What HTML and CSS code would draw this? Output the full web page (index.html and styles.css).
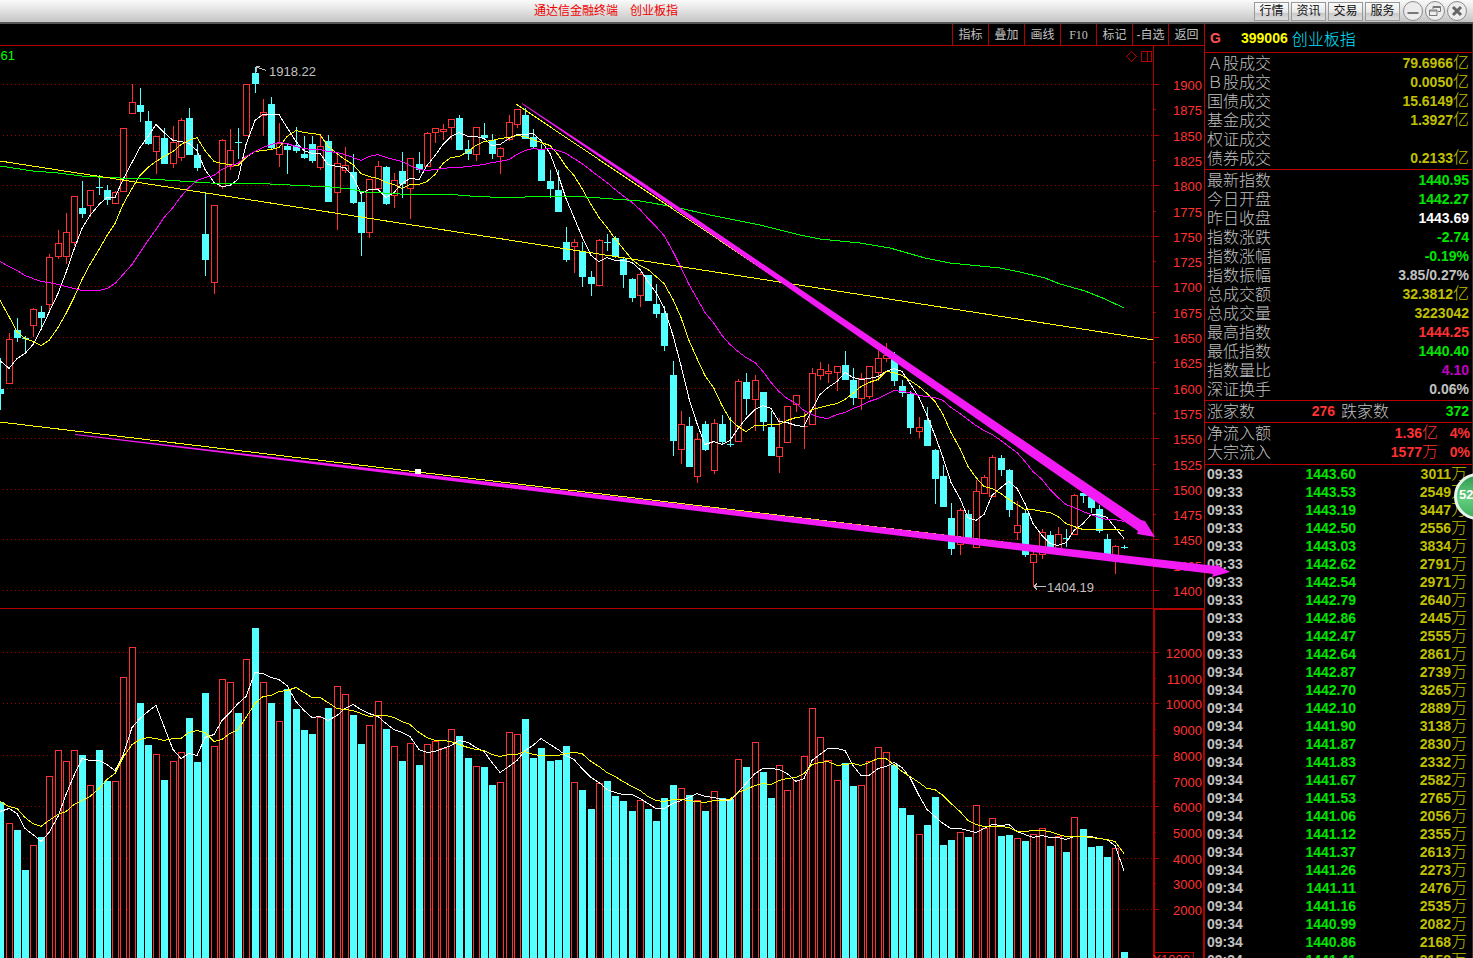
FILE: index.html
```html
<!DOCTYPE html>
<html lang="zh-CN">
<head>
<meta charset="utf-8">
<title>通达信金融终端 创业板指</title>
<link rel="stylesheet" href="styles.css">
</head>
<body>
<header class="titlebar">
  <h1 class="title">通达信金融终端<span class="title-symbol">创业板指</span></h1>
  <nav class="modules">
    <button class="module" type="button">行情</button>
    <button class="module" type="button">资讯</button>
    <button class="module" type="button">交易</button>
    <button class="module" type="button">服务</button>
  </nav>
  <div class="window-controls">
    <button class="control" type="button" aria-label="最小化"><svg viewBox="0 0 22 22"><circle cx="11" cy="11" r="9.5"/><path d="M5.500 13h11" stroke-width="2"/></svg></button>
    <button class="control" type="button" aria-label="还原"><svg viewBox="0 0 22 22"><circle cx="11" cy="11" r="9.500"/><path class="thin" d="M9 9V6.500h7.500v5H14M5.500 10H13v5.500H5.500zM5.500 11H13M9 7.500h7.500"/></svg></button>
    <button class="control" type="button" aria-label="关闭"><svg viewBox="0 0 22 22"><circle cx="11" cy="11" r="9.500"/><path class="cross" d="M7 7l8 8M15 7l-8 8"/></svg></button>
  </div>
</header>
<main class="workspace">
  <section class="chart-pane">
    <nav class="toolbar">
      <button class="tool" type="button">指标</button>
      <button class="tool" type="button">叠加</button>
      <button class="tool" type="button">画线</button>
      <button class="tool latin" type="button">F10</button>
      <button class="tool" type="button">标记</button>
      <button class="tool" type="button">-自选</button>
      <button class="tool" type="button">返回</button>
    </nav>
    <div class="chart-area">
      <svg class="chart" viewBox="0 46 1204 912" preserveAspectRatio="none" role="img" aria-label="创业板指 K线图">
        <g id="grid" class="crisp"></g>
        <g id="bars" class="crisp"></g>
        <g id="averages" class="crisp lines"></g>
        <g class="crisp lines">
          <polyline class="green" points="0,166 33,171 58,173 82,176 98,177 120,178 150,179 180,181 210,183 270,184 290,185 330,187 350,189 365,192 400,194 445,194 470,196 490,197 525,197 545,196 570,196 600,198 640,201 675,207 710,215 760,225 800,235 820,239 860,243 890,248 925,258 950,263 1000,268 1020,272 1045,278 1060,284 1085,291 1105,299 1124,308"/>
          <path class="yellow" d="M0 161L1153 340M0 422L1153 560M516 104L885 351"/>
          <path class="silver" d="M256.500 72V66M256.500 66H260M256.500 67L266 70.500M1046 586.500H1034M1034 586.500l3-3M1034 586.500l3 3"/>
          <path class="frame" d="M1126.500 56.500l5-5l5 5l-5 5zM1141.500 51.500h10v10h-10zM1147.500 51.500v10"/>
        </g>
        <g id="labels"></g>
        <g class="trend">
          <path d="M522 103L636 178L1141 520L1145 521L1155 537L1137 534L1138 531L636 182L522 104z"/>
          <path d="M75 434L1216 566L1215 564L1230 572L1212 577L1213 574L75 435z"/>
        </g>
        <rect class="handle" x="415" y="469" width="6" height="5"/>
      </svg>
    </div>
  </section>
  <aside class="quote-pane">
    <header class="symbol"><span class="flag">G</span><span class="code">399006</span><span class="name">创业板指</span></header>
    <table class="quotes">
      <tbody>
        <tr><th scope="row">Ａ股成交</th><td class="gold">79.6966<i>亿</i></td></tr>
        <tr><th scope="row">Ｂ股成交</th><td class="gold">0.0050<i>亿</i></td></tr>
        <tr><th scope="row">国债成交</th><td class="gold">15.6149<i>亿</i></td></tr>
        <tr><th scope="row">基金成交</th><td class="gold">1.3927<i>亿</i></td></tr>
        <tr><th scope="row">权证成交</th><td></td></tr>
        <tr><th scope="row">债券成交</th><td class="gold">0.2133<i>亿</i></td></tr>
      </tbody>
    </table>
    <table class="quotes">
      <tbody>
        <tr><th scope="row">最新指数</th><td class="down">1440.95</td></tr>
        <tr><th scope="row">今日开盘</th><td class="down">1442.27</td></tr>
        <tr><th scope="row">昨日收盘</th><td class="flat">1443.69</td></tr>
        <tr><th scope="row">指数涨跌</th><td class="down">-2.74</td></tr>
        <tr><th scope="row">指数涨幅</th><td class="down">-0.19%</td></tr>
        <tr><th scope="row">指数振幅</th><td>3.85/0.27%</td></tr>
        <tr><th scope="row">总成交额</th><td class="gold">32.3812<i>亿</i></td></tr>
        <tr><th scope="row">总成交量</th><td class="gold">3223042</td></tr>
        <tr><th scope="row">最高指数</th><td class="up">1444.25</td></tr>
        <tr><th scope="row">最低指数</th><td class="down">1440.40</td></tr>
        <tr><th scope="row">指数量比</th><td class="ratio">4.10</td></tr>
        <tr><th scope="row">深证换手</th><td>0.06%</td></tr>
      </tbody>
    </table>
    <table class="quotes breadth">
      <tbody><tr><th scope="row">涨家数</th><td class="up">276</td><th scope="row">跌家数</th><td class="down">372</td></tr></tbody>
    </table>
    <table class="quotes flows">
      <tbody>
        <tr><th scope="row">净流入额</th><td class="up">1.36<i>亿</i></td><td class="up share">4%</td></tr>
        <tr><th scope="row">大宗流入</th><td class="up">1577<i>万</i></td><td class="up share">0%</td></tr>
      </tbody>
    </table>
    <table class="ticks"><tbody id="ticks"></tbody></table>
  </aside>
  <div class="badge">52</div>
</main>
<script src="chart.js"></script>
</body>
</html>
```
FILE: styles.css
```css
* { box-sizing: border-box; }

body {
  margin: 0;
  height: 100vh;
  display: flex;
  flex-direction: column;
  overflow: hidden;
  background: #000;
  color: #c0c0c0;
  font-family: "Liberation Sans", "Noto Sans CJK SC", sans-serif;
}

button {
  margin: 0;
  padding: 0;
  font: inherit;
  color: inherit;
  white-space: nowrap;
}

.titlebar {
  flex: none;
  height: 24px;
  display: flex;
  align-items: center;
  padding: 0 5px 0 0;
  background: linear-gradient(#fafafa, #e6e6e6 40%, #c4c4c4);
  border-bottom: 2px solid #555;
}

.title {
  flex: 1;
  margin: 0;
  padding-right: 42px;
  text-align: center;
  font-size: 12px;
  line-height: 20px;
  font-weight: 400;
  color: #f00000;
}

.title-symbol { margin-left: 12px; }

.modules { display: flex; gap: 2px; }

.module {
  width: 35px;
  height: 19px;
  border: 1px solid #999;
  background: linear-gradient(#fafafa, #e8e8e8 55%, #cacaca 60%, #dcdcdc);
  color: #111;
  font-size: 12px;
  line-height: 16px;
}

.window-controls { display: flex; margin-left: 2px; }

.control {
  width: 22px;
  height: 22px;
  border: 0;
  background: none;
}

.control svg {
  display: block;
  width: 22px;
  height: 22px;
  fill: none;
  stroke: #777;
  stroke-width: 2;
}

.control circle { fill: #ececec; stroke: #8a8a8a; stroke-width: 1; }
.control .thin { stroke-width: 1; }
.control .cross { stroke: #666; stroke-width: 3; }

.workspace {
  position: relative;
  flex: 1;
  min-height: 0;
  display: flex;
  overflow: hidden;
}

.chart-pane {
  flex: 1;
  min-width: 0;
  display: flex;
  flex-direction: column;
}

.toolbar {
  flex: none;
  height: 22px;
  display: flex;
  justify-content: flex-end;
  border-bottom: 1px solid #b00000;
}

.tool {
  width: 36px;
  border: 0;
  border-left: 1px solid #b00000;
  background: #000;
  font-size: 12px;
  line-height: 20px;
}

.latin { font-family: "Liberation Serif", serif; }

.chart-area {
  position: relative;
  z-index: 1;
  flex: 1;
  min-height: 0;
}

.chart {
  display: block;
  width: 100%;
  height: 100%;
  overflow: visible;
}

.crisp { shape-rendering: crispEdges; }
.lines { fill: none; stroke-width: 1; }
.dots { stroke: #a00000; stroke-dasharray: 1 3; }
.frame { stroke: #b00000; fill: none; }
.thick { stroke-width: 2; }
.rise { stroke: #ff3232; fill: #000; }
.fall { fill: #54ffff; }
.white { stroke: #fff; }
.yellow { stroke: #ff0; }
.magenta { stroke: #f0f; }
.green { stroke: #0f0; }
.silver { stroke: #c0c0c0; }
.handle { fill: #fff; }
.trend { fill: #f31bf3; }

.axis-text { fill: #ff3232; font-size: 13px; text-anchor: end; }
.note-text { fill: #c0c0c0; font-size: 13px; }
.value-text { fill: #0f0; font-size: 13px; }

.quote-pane {
  flex: none;
  width: 269px;
  border-left: 1px solid #c00000;
  border-right: 1px solid #333;
  overflow: hidden;
}

.symbol {
  height: 29px;
  display: flex;
  align-items: center;
  padding-left: 5px;
  border-bottom: 1px solid #c00000;
  font-size: 14px;
  font-weight: 700;
}

.flag { width: 31px; color: #ff5050; }
.code { color: #ff0; }
.name { margin-left: 4px; color: #00e5ff; font-size: 16px; font-weight: 300; }

table { width: 100%; border-collapse: collapse; }

th {
  padding: 0;
  text-align: left;
  font-size: 16px;
  font-weight: 300;
  line-height: 19px;
}

td {
  padding: 0;
  text-align: right;
  font-size: 14px;
  font-weight: 700;
  line-height: 19px;
  white-space: nowrap;
}

td i { font-size: 16px; font-style: normal; font-weight: 300; line-height: 16px; }

.quotes { display: flex; border-bottom: 1px solid #c00000; padding: 1px 3px 1px 2px; }
.quotes tbody { flex: 1; }
.quotes tr { display: flex; justify-content: space-between; height: 19px; }
.breadth tr { justify-content: flex-start; }
.breadth th { width: 49px; }
.breadth td { width: 79px; }
.breadth th + td + th { margin-left: 6px; }
.breadth td:last-child { flex: 1; }
.flows { padding: 1px 2px 2px; }
.flows td { flex: 1; }
.flows .share { flex: none; width: 32px; }

.gold { color: #c0c000; }
.down { color: #00e600; }
.up { color: #ff3232; }
.flat { color: #fff; }
.ratio { color: #c000c0; }

.ticks td { height: 18px; line-height: 18px; }
.ticks td:first-child { padding-left: 2px; text-align: left; }
.ticks td:last-child { width: 116px; padding-right: 5px; }

.badge {
  position: absolute;
  z-index: 2;
  right: -28px;
  top: 449px;
  width: 47px;
  height: 47px;
  border: 3px solid #e8f4ea;
  border-radius: 50%;
  background: linear-gradient(#2f9a50, #62cf7c 55%, #3fae5e);
  color: #fff;
  font-size: 13px;
  font-weight: 700;
  line-height: 38px;
  padding-left: 2px;
}
```
FILE: chart.js
```js
// Each candle: direction (r = rise, c = fall), high, body top, body bottom, low, volume bar top.
const candles = `
c 358 389 394 410 802|r 333 339 383 383 823|c 318 330 338 342 830|c 336 338 339 354 870|r 308 309 325 336 845
c 306 312 318 330 837|r 254 257 304 312 776|r 230 243 256 258 750|r 213 232 256 263 761|r 196 196 242 245 750
c 181 208 214 218 755|r 190 190 205 216 785|c 175 187 187 195 750|c 185 190 200 205 781|r 191 192 203 203 781
r 128 128 191 191 677|r 84 102 113 113 647|c 88 105 112 122 703|c 111 121 144 145 745|r 136 136 151 173 754
c 128 138 164 164 780|r 126 142 163 167 761|r 118 120 157 160 752|c 108 118 155 155 718|c 144 155 168 171 762
c 193 234 260 276 693|r 205 205 282 293 746|r 139 140 186 188 679|r 129 150 166 169 682|c 128 142 142 159 713
r 84 84 135 135 659|c 67 73 84 93 628|r 99 112 115 135 682|c 97 104 148 150 703|r 123 143 154 166 721
c 144 146 150 174 689|c 127 145 151 153 709|c 136 154 158 159 730|c 136 144 161 163 734|r 135 146 167 169 717
c 135 141 202 202 708|r 154 163 192 229 686|r 147 165 170 172 694|c 154 172 203 204 715|c 191 202 233 256 744
r 179 179 232 237 725|r 161 166 188 188 701|c 166 167 204 205 729|r 173 180 195 207 746|c 152 171 184 198 761
r 158 158 188 218 743|c 152 164 170 173 765|r 132 133 166 166 744|r 128 128 132 142 741|r 124 129 131 139 748
r 119 119 127 139 729|c 115 118 150 150 736|c 140 149 154 160 758|r 127 127 154 160 766|c 123 135 138 138 767
c 134 140 154 159 785|r 147 148 156 173 782|r 115 122 139 140 732|r 109 109 124 127 734|c 108 115 139 139 719
c 129 137 147 148 758|c 144 149 181 181 748|c 170 181 189 198 761|c 170 190 212 212 760|c 227 242 260 262 746
r 239 242 246 272 782|c 242 251 277 287 790|c 271 277 284 296 809|r 239 240 285 285 783|c 234 242 242 251 781
c 236 238 257 258 796|c 258 259 275 288 801|c 278 279 298 302 811|r 272 274 295 306 800|c 275 275 301 301 809
c 284 304 314 318 821|c 306 313 346 351 798|c 361 375 441 456 785|r 411 424 449 463 788|c 417 426 467 467 795
r 433 439 476 482 800|c 421 424 450 451 811|r 419 423 470 473 791|c 415 424 442 445 798|c 417 444 444 447 799
r 379 381 441 441 759|c 373 382 399 415 767|r 375 380 399 430 742|c 392 392 422 431 772|c 411 427 456 456 798
r 418 447 456 472 765|r 406 406 442 442 790|r 395 395 404 411 780|r 412 426 426 448 756|r 368 373 424 424 708
r 362 369 375 379 737|r 364 371 373 382 760|r 366 366 372 390 780|c 351 365 380 380 763|c 368 380 398 405 786
r 373 378 398 409 785|r 366 366 396 398 761|r 351 358 372 380 747|r 343 355 358 361 752|c 352 356 381 386 765
c 380 386 393 397 808|c 391 394 428 434 815|r 417 427 431 437 834|c 407 420 446 446 825|c 449 450 479 504 797
c 465 476 507 507 845|c 503 518 549 555 840|r 508 510 544 554 832|c 510 514 541 541 837|r 480 491 547 547 805
r 475 477 493 493 828|r 455 457 496 496 818|c 455 458 470 476 836|c 469 470 510 517 835|r 501 525 532 539 838
c 510 513 555 557 841|r 552 554 562 586 834|r 529 532 554 558 828|c 531 535 550 550 846|r 527 534 550 550 836
c 529 538 538 547 852|r 494 495 534 534 817|c 493 493 496 503 829|c 496 497 508 513 847|c 505 509 531 533 846
c 534 539 556 556 857|r 545 546 557 573 848|c 545 547 547 549 952`
  .trim().split(/[|\n]/).map((row) => {
    const [kind, ...values] = row.split(" ");
    const [high, top, bottom, low, volume] = values.map(Number);
    return { kind, high, top, bottom, low, volume, close: kind === "r" ? top : bottom };
  });

const centre = (i) => Math.floor(0.8 + 8.2 * i);
const put = (id, markup) => { document.getElementById(id).innerHTML = markup; };

// Grid, axis and labels
let grid = "";
let labels = "";
const label = (x, y, text, name) => `<text x="${x}" y="${y}" class="${name}">${text}</text>`;

for (let k = 0; k <= 20; k++) {
  const y = Math.round(84 + k * 25.3) + 0.5;
  const major = k % 2 === 0;
  if (major) grid += `<path class="dots" d="M3 ${y}H1153"/>`;
  grid += `<path class="frame" d="M1153 ${y}h${major ? 6 : 3}"/>`;
  labels += label(1202, y + 5, 1900 - k * 25, "axis-text");
}
for (let k = 0; k <= 10; k++) {
  const y = Math.round(652 + k * 25.7) + 0.5;
  const major = k % 2 === 0;
  if (major) grid += `<path class="dots" d="M3 ${y}H1153"/>`;
  grid += `<path class="frame" d="M1155 ${y}h${major ? 4 : 1}"/>`;
  labels += label(1202, y + 5, 12000 - k * 1000, "axis-text");
}
grid += `<path class="frame" d="M1153.5 46V608M0 608.5H1154M1155 952.5H1193.5V958"/>`;
grid += `<path class="frame thick" d="M1154 958V609H1204V958"/>`;
labels += label(1190, 964, "X1000", "axis-text");
labels += label(269, 76, "1918.22", "note-text");
labels += label(1047, 592, "1404.19", "note-text");
labels += label(-3, 60, ".61", "value-text");

// Candles and volume bars
let bars = "";
candles.forEach((c, i) => {
  const x = centre(i);
  if (c.kind === "r") {
    const wick = `M${x + 0.5} ${c.high}V${c.top}M${x + 0.5} ${c.bottom + 1}V${c.low + 1}`;
    bars += `<path class="rise" d="${wick}"/>`;
    bars += c.top === c.bottom
      ? `<path class="rise" d="M${x - 3} ${c.top + 0.5}h7"/>`
      : `<rect class="rise" x="${x - 2.5}" y="${c.top + 0.5}" width="6" height="${c.bottom - c.top}"/>`;
    bars += `<rect class="rise" x="${x - 2.5}" y="${c.volume + 0.5}" width="6" height="${970 - c.volume}"/>`;
  } else {
    bars += `<rect class="fall" x="${x}" y="${c.high}" width="1" height="${c.low - c.high}"/>`;
    bars += `<rect class="fall" x="${x - 3}" y="${c.top}" width="7" height="${Math.max(1, c.bottom - c.top)}"/>`;
    bars += `<rect class="fall" x="${x - 3}" y="${c.volume}" width="7" height="${970 - c.volume}"/>`;
  }
});

// Moving averages; the seed holds the values that need earlier history.
function average(field, span, seed, name) {
  const points = candles.map((c, i) => {
    const value = i < seed.length
      ? seed[i]
      : candles.slice(i - span + 1, i + 1).reduce((sum, d) => sum + d[field], 0) / span;
    return `${centre(i)},${Math.round(value) + 0.5}`;
  });
  return `<polyline class="${name}" points="${points.join(" ")}"/>`;
}

put("grid", grid);
put("labels", labels);
put("bars", bars);
put("averages",
  average("close", 5, [360, 368, 358, 353], "white") +
  average("close", 10, [300, 316, 331, 338, 341, 345, 340, 327, 313], "yellow") +
  average("close", 20, [261, 266, 270, 275, 278, 281, 282, 284, 286, 288, 290, 290, 290, 288, 283, 274, 264, 252, 240], "magenta") +
  average("volume", 5, [811, 808, 813, 828], "white") +
  average("volume", 10, [801, 806, 808, 817, 823, 826, 820, 814, 811], "yellow"));

// Time and sales
const ticks = `1443.60 3011,1443.53 2549,1443.19 3447,1442.50 2556,1443.03 3834,1442.62 2791,1442.54 2971,
1442.79 2640,1442.86 2445,1442.47 2555,1442.64 2861,1442.87 2739,1442.70 3265,1442.10 2889,1441.90 3138,
1441.87 2830,1441.83 2332,1441.67 2582,1441.53 2765,1441.06 2056,1441.12 2355,1441.37 2613,1441.26 2273,
1441.11 2476,1441.16 2535,1440.99 2082,1440.86 2168,1441.41 3158`.split(",").map((t) => t.trim().split(" "));
put("ticks", ticks.map(([price, volume], i) =>
  `<tr><td>${i < 11 ? "09:33" : "09:34"}</td><td class="down">${price}</td><td class="gold">${volume}<i>万</i></td></tr>`).join(""));
```
